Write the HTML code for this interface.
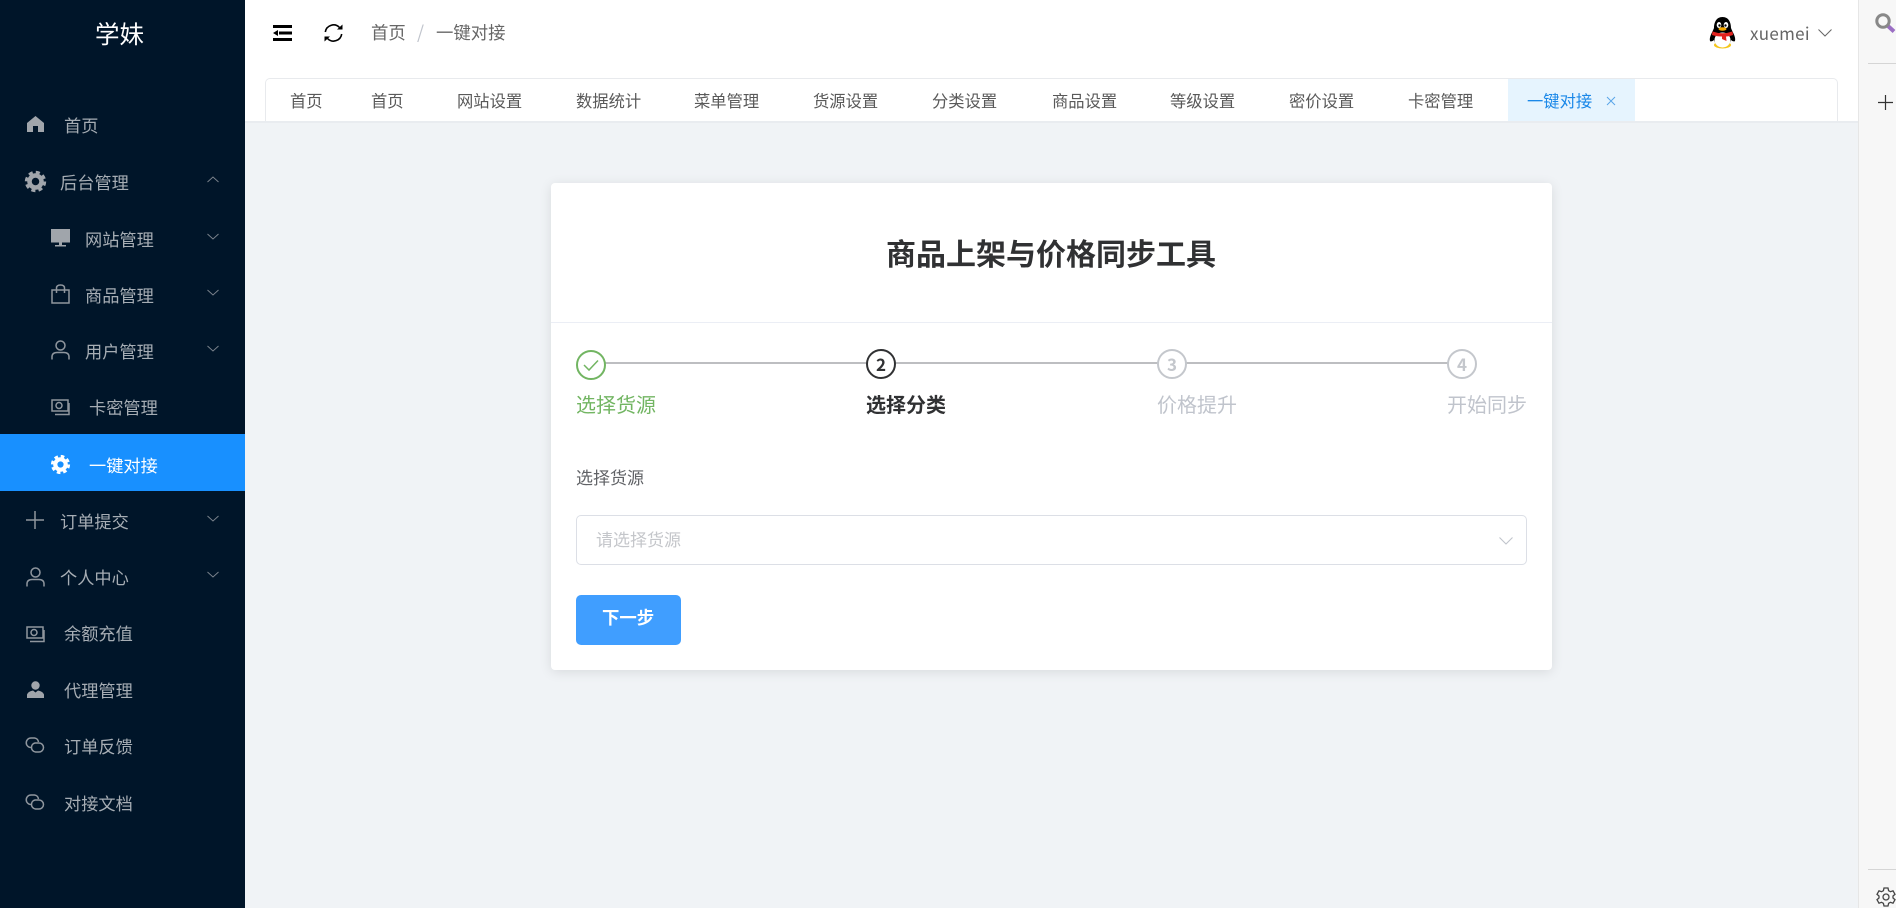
<!DOCTYPE html>
<html lang="zh"><head><meta charset="utf-8"><title>一键对接</title>
<style>
*{box-sizing:border-box}
html,body{margin:0;padding:0;width:1896px;height:908px;overflow:hidden;background:#f0f3f6;font-family:"Noto Sans CJK SC","Liberation Sans",sans-serif}
.a{position:absolute;white-space:nowrap}
.s{position:absolute;left:0;top:0;width:245px;height:908px;background:#001529}
.t{position:absolute;white-space:nowrap;font-size:17.2px;line-height:24px;color:#a6adb4}
svg{position:absolute;overflow:visible}
.ic{fill:none;stroke:#8f969e;stroke-width:1.5}
.ch{fill:none;stroke:#7d858e;stroke-width:.9}
.f{fill:#a0a5ab}
.tab{position:absolute;top:89px;font-size:16.3px;line-height:22px;color:#595959;white-space:nowrap}
.num{position:absolute;width:30px;height:30px;border-radius:50%;border:2px solid #c4c7cc;color:#c4c7cc;font-weight:700;font-size:17px;line-height:26px;text-align:center;background:#fff}
</style></head><body>
<div class="s">
<div class="a" style="left:95px;top:16px;font-size:24.5px;line-height:36px;color:#fff">学妹</div>

<svg style="left:27px;top:116px" width="17" height="16" viewBox="0 0 17 16"><path class="f" d="M8.5 0 L17 7 V16 H11 V10 H6 V16 H0 V7Z"/></svg>
<div class="t" style="left:64px;top:113px">首页</div>

<svg style="left:25px;top:171px" width="21" height="21" viewBox="0 0 21 21"><circle cx="10.5" cy="10.5" r="6" fill="none" stroke="#a0a5ab" stroke-width="4.5"/><circle cx="10.5" cy="10.5" r="9" fill="none" stroke="#a0a5ab" stroke-width="3.4" stroke-dasharray="4 3.07"/></svg>
<div class="t" style="left:60px;top:170px">后台管理</div>
<svg style="left:207px;top:176px" width="12" height="7"><path class="ch" d="M0.5 6 L6 1 L11.500 6"/></svg>

<svg style="left:51px;top:229px" width="19" height="18" viewBox="0 0 19 18"><rect class="f" width="19" height="13.500"/><rect class="f" x="8" y="13" width="3" height="3"/><rect class="f" x="4" y="16" width="11" height="1.500"/></svg>
<div class="t" style="left:85px;top:227px">网站管理</div>
<svg style="left:207px;top:233px" width="12" height="7"><path class="ch" d="M0.5 1 L6 6 L11.500 1"/></svg>

<svg style="left:51px;top:284px" width="19" height="20" viewBox="0 0 19 20"><path class="ic" d="M1 6 H18 V19 H1Z M5.500 9 V4 Q5.500 1 9.500 1 Q13.500 1 13.500 4 V9"/></svg>
<div class="t" style="left:85px;top:283px">商品管理</div>
<svg style="left:207px;top:289px" width="12" height="7"><path class="ch" d="M0.5 1 L6 6 L11.500 1"/></svg>

<svg style="left:51px;top:340px" width="19" height="20" viewBox="0 0 19 20"><circle class="ic" cx="9.500" cy="5.500" r="4.500"/><path class="ic" d="M1 19.500 V17 Q1 12.500 6 12.500 H13 Q18 12.500 18 17 V19.500"/></svg>
<div class="t" style="left:85px;top:339px">用户管理</div>
<svg style="left:207px;top:345px" width="12" height="7"><path class="ch" d="M0.5 1 L6 6 L11.500 1"/></svg>

<svg style="left:51px;top:399px" width="19" height="17" viewBox="0 0 19 17"><path class="ic" d="M1 1 H17 V12 H1Z M18 4 V15.500 H4"/><circle class="ic" cx="8" cy="6.500" r="3"/></svg>
<div class="t" style="left:89px;top:395px">卡密管理</div>

<div class="a" style="left:0;top:434px;width:245px;height:57px;background:#1890ff"></div>
<svg style="left:51px;top:455px" width="19" height="19" viewBox="0 0 19 19"><circle cx="9.500" cy="9.500" r="5.200" fill="none" stroke="#fff" stroke-width="4.200"/><circle cx="9.500" cy="9.500" r="8.200" fill="none" stroke="#fff" stroke-width="2.800" stroke-dasharray="3.600 2.840"/></svg>
<div class="t" style="left:89px;top:453px;color:#fff">一键对接</div>

<svg style="left:26px;top:511px" width="18" height="18"><path class="ic" d="M9 0 V18 M0 9 H18"/></svg>
<div class="t" style="left:60px;top:509px">订单提交</div>
<svg style="left:207px;top:515px" width="12" height="7"><path class="ch" d="M0.5 1 L6 6 L11.500 1"/></svg>

<svg style="left:26px;top:567px" width="19" height="20" viewBox="0 0 19 20"><circle class="ic" cx="9.500" cy="5.500" r="4.500"/><path class="ic" d="M1 19.500 V17 Q1 12.500 6 12.500 H13 Q18 12.500 18 17 V19.500"/></svg>
<div class="t" style="left:60px;top:565px">个人中心</div>
<svg style="left:207px;top:571px" width="12" height="7"><path class="ch" d="M0.5 1 L6 6 L11.500 1"/></svg>

<svg style="left:26px;top:626px" width="19" height="17" viewBox="0 0 19 17"><path class="ic" d="M1 1 H17 V12 H1Z M18 4 V15.500 H4"/><circle class="ic" cx="8" cy="6.500" r="3"/></svg>
<div class="t" style="left:64px;top:621px">余额充值</div>

<svg style="left:27px;top:681px" width="17" height="17" viewBox="0 0 17 17"><circle class="f" cx="8.500" cy="4.500" r="4.200"/><path class="f" d="M0 17 V13.500 Q1 10.500 6 9.500 L8.500 11.500 L11 9.500 Q16 10.500 17 13.500 V17Z"/></svg>
<div class="t" style="left:64px;top:678px">代理管理</div>

<svg style="left:26px;top:737px" width="18" height="16" viewBox="0 0 18 16"><path class="ic" d="M6 10.500 H5 A4.500 4.500 0 0 1 5 1 H8.500 A4.500 4.500 0 0 1 12.500 5"/><path class="ic" d="M9 6 H13 A4.500 4.500 0 0 1 13 15 H9.500 A4.500 4.500 0 0 1 5.500 10.500 A4.500 4.500 0 0 1 9 6Z"/></svg>
<div class="t" style="left:64px;top:734px">订单反馈</div>

<svg style="left:26px;top:794px" width="18" height="16" viewBox="0 0 18 16"><path class="ic" d="M6 10.500 H5 A4.500 4.500 0 0 1 5 1 H8.500 A4.500 4.500 0 0 1 12.500 5"/><path class="ic" d="M9 6 H13 A4.500 4.500 0 0 1 13 15 H9.500 A4.500 4.500 0 0 1 5.500 10.500 A4.500 4.500 0 0 1 9 6Z"/></svg>
<div class="t" style="left:64px;top:791px">对接文档</div>
</div>

<!-- header -->
<div class="a" style="left:245px;top:0;width:1613px;height:121px;background:#fff"></div>
<svg style="left:273px;top:25px" width="19" height="16" viewBox="0 0 19 16"><path fill="#000" d="M0 0 H19 V3 H0Z M0 13 H19 V16 H0Z M6 6.500 H19 V9.500 H6Z M5 5 V11 L0 8Z"/></svg>
<svg style="left:324px;top:23px" width="19" height="20" viewBox="0 0 19 20"><path fill="none" stroke="#000" stroke-width="1.600" d="M1.300 9 A8.300 8.300 0 0 1 15.500 4.500 M17.700 11 A8.300 8.300 0 0 1 3.500 15.500"/><path fill="#000" d="M13 6.500 H18.500 V1.500Z M6 13.500 H0.500 V18.500Z"/></svg>
<div class="a" style="left:371px;top:20px;font-size:17.4px;line-height:25px;color:#666">首页</div>
<div class="a" style="left:417px;top:20px;font-size:18px;line-height:25px;color:#c0c4cc">/</div>
<div class="a" style="left:436px;top:20px;font-size:17.4px;line-height:25px;color:#666">一键对接</div>

<svg style="left:1709px;top:17px" width="27" height="32" viewBox="0 0 27 32">
<ellipse cx="13.500" cy="28" rx="8.500" ry="3.500" fill="#f5c518"/>
<path fill="#000" d="M13.500 0 C7 0 5 6 5 11 C3 16 0 20 1 24 C2 25 4 24 5 23 C6 27 9 30 13.500 30 C18 30 21 27 22 23 C23 24 25 25 26 24 C27 20 24 16 22 11 C22 6 20 0 13.500 0Z"/>
<ellipse cx="13.500" cy="23" rx="8" ry="7.500" fill="#fff"/>
<ellipse cx="10" cy="8" rx="2.300" ry="3" fill="#fff"/><ellipse cx="17" cy="8" rx="2.300" ry="3" fill="#fff"/>
<circle cx="10.500" cy="8.500" r="1.200" fill="#000"/><circle cx="16.500" cy="8.500" r="1.200" fill="#000"/>
<ellipse cx="13.500" cy="12" rx="4" ry="1.700" fill="#f5a800"/>
<path fill="#e3231f" d="M3.500 14.500 Q13.500 18 23.500 14.500 L24 18 Q20 19.500 17 19.500 L17.500 24 L13 22 L13 19.500 Q7 19.500 3 18Z"/>
</svg>
<div class="a" style="left:1750px;top:20px;font-size:17px;line-height:25px;color:#666;letter-spacing:.3px">xuemei</div>
<svg style="left:1818px;top:29px" width="14" height="8"><path fill="none" stroke="#666" stroke-width="1" d="M0.500 0.500 L7 7 L13.500 0.500"/></svg>

<!-- tabs -->
<div class="a" style="left:265px;top:78px;width:1573px;height:44px;border:1px solid #e8eaed;border-bottom:none;border-radius:5px 5px 0 0;background:#fff"></div>
<div class="tab" style="left:290px">首页</div>
<div class="tab" style="left:371px">首页</div>
<div class="tab" style="left:457px">网站设置</div>
<div class="tab" style="left:576px">数据统计</div>
<div class="tab" style="left:694px">菜单管理</div>
<div class="tab" style="left:813px">货源设置</div>
<div class="tab" style="left:932px">分类设置</div>
<div class="tab" style="left:1052px">商品设置</div>
<div class="tab" style="left:1170px">等级设置</div>
<div class="tab" style="left:1289px">密价设置</div>
<div class="tab" style="left:1408px">卡密管理</div>
<div class="a" style="left:1508px;top:79px;width:127px;height:42px;background:#e6f4fe"></div>
<div class="tab" style="left:1527px;color:#1b88e8">一键对接</div>
<svg style="left:1606px;top:96px" width="10" height="10"><path fill="none" stroke="#5aa5e8" stroke-width="1" d="M1 1 L9 9 M9 1 L1 9"/></svg>
<div class="a" style="left:245px;top:121px;width:1613px;height:2px;background:#e9ecf0"></div>

<!-- right panel -->
<div class="a" style="left:1858px;top:0;width:38px;height:908px;background:#f7f7f7;border-left:1px solid #e6e6e6"></div>
<svg style="left:1875px;top:13px" width="21" height="20" viewBox="0 0 21 20"><path stroke="#9b6fc4" stroke-width="4" d="M13 13 L19 18.500"/><circle cx="8" cy="8" r="6.200" fill="#f7f7f7" stroke="#888" stroke-width="3"/></svg>
<div class="a" style="left:1868px;top:63px;width:28px;height:1px;background:#d5d5d5"></div>
<svg style="left:1878px;top:95px" width="15" height="15"><path fill="none" stroke="#333" stroke-width="1.200" d="M7.500 0 V15 M0 7.500 H15"/></svg>
<div class="a" style="left:1868px;top:869px;width:28px;height:1px;background:#d5d5d5"></div>
<svg style="left:1876px;top:887px" width="20" height="20" viewBox="0 0 20 20"><circle cx="10" cy="10" r="3" fill="none" stroke="#444" stroke-width="1.300"/><path fill="none" stroke="#444" stroke-width="1.300" d="M8 1 H12 L12.600 3.700 L14.500 4.700 L17 3.800 L19 7.300 L17 9 V11 L19 12.700 L17 16.200 L14.500 15.300 L12.600 16.300 L12 19 H8 L7.400 16.300 L5.500 15.300 L3 16.200 L1 12.700 L3 11 V9 L1 7.300 L3 3.800 L5.500 4.700 L7.400 3.700Z"/></svg>

<!-- card -->
<div class="a" style="left:551px;top:183px;width:1001px;height:487px;background:#fff;border-radius:4px;box-shadow:0 2px 12px rgba(0,0,0,.1)"></div>
<div class="a" style="left:886px;top:231px;font-size:30px;line-height:42px;font-weight:700;color:#303133">商品上架与价格同步工具</div>
<div class="a" style="left:551px;top:322px;width:1001px;height:1px;background:#ebeef5"></div>

<div class="a" style="left:590px;top:362px;width:871px;height:2px;background:#bdbec1"></div>
<div class="num" style="left:576px;top:350px;border-color:#72b562"></div>
<svg style="left:583px;top:359px" width="16" height="12"><path fill="none" stroke="#72b562" stroke-width="1.500" d="M1 6 L6 11 L15 1.500"/></svg>
<div class="a" style="left:576px;top:389px;font-size:20px;line-height:29px;color:#72b562">选择货源</div>
<div class="num" style="left:866px;top:349px;border-color:#303133;color:#303133">2</div>
<div class="a" style="left:866px;top:389px;font-size:20px;line-height:29px;font-weight:700;color:#303133">选择分类</div>
<div class="num" style="left:1157px;top:349px">3</div>
<div class="a" style="left:1157px;top:389px;font-size:20px;line-height:29px;color:#c0c4cc">价格提升</div>
<div class="num" style="left:1447px;top:349px">4</div>
<div class="a" style="left:1447px;top:389px;font-size:20px;line-height:29px;color:#c0c4cc">开始同步</div>

<div class="a" style="left:576px;top:464px;font-size:17px;line-height:25px;color:#606266">选择货源</div>
<div class="a" style="left:576px;top:515px;width:951px;height:50px;border:1px solid #dcdfe6;border-radius:5px;background:#fff"></div>
<div class="a" style="left:596px;top:526px;font-size:17px;line-height:25px;color:#c4c6ca">请选择货源</div>
<svg style="left:1499px;top:537px" width="14" height="8"><path fill="none" stroke="#c0c4cc" stroke-width="1.100" d="M0.500 0.500 L7 7 L13.500 0.500"/></svg>
<div class="a" style="left:576px;top:595px;width:105px;height:50px;border-radius:5px;background:#409eff"></div>
<div class="a" style="left:602px;top:605px;font-size:17.4px;line-height:25px;font-weight:700;color:#fff">下一步</div>
</body></html>
